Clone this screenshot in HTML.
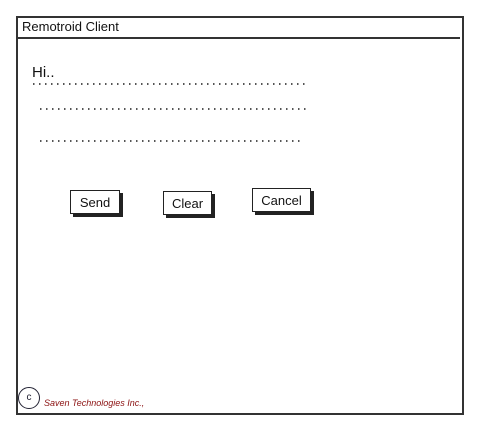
<!DOCTYPE html>
<html><head><meta charset="utf-8"><style>
body{margin:0;width:495px;height:445px;background:#fff;position:relative;overflow:hidden;font-family:"Comic Sans MS","Liberation Sans",sans-serif}
.a{position:absolute}
.frame{left:16px;top:16px;width:444px;height:395px;border:2px solid #333}
.title{left:16px;top:16px;width:444px;height:21px;border-bottom:2px solid #333}
.dots{height:2px;background:linear-gradient(90deg,#555 0 1.5px,transparent 1.5px) 0 0/6px 2px repeat-x}
.btn{background:#fff;border:1.5px solid #222;box-shadow:3px 3px 0 #222;font-size:13px;text-align:center;line-height:24px;color:#111}
</style></head><body>
<div class="a frame"></div>
<div class="a title"></div>
<div class="a" style="left:22px;top:19px;font-size:13px;color:#111">Remotroid Client</div>
<div class="a" style="left:32px;top:64px;font-size:15px;color:#111">Hi..</div>
<div class="a dots" style="left:33px;top:83px;width:274px"></div>
<div class="a dots" style="left:40px;top:108px;width:267px"></div>
<div class="a dots" style="left:40px;top:140px;width:260px"></div>
<div class="a btn" style="left:70px;top:190px;width:48px;height:22px">Send</div>
<div class="a btn" style="left:163px;top:191px;width:47px;height:22px">Clear</div>
<div class="a btn" style="left:252px;top:188px;width:57px;height:22px">Cancel</div>
<div class="a" style="left:18px;top:387px;width:20px;height:20px;border:1.5px solid #223;border-radius:50%;font-size:10px;text-align:center;line-height:20px;color:#223">c</div>
<div class="a" style="left:44px;top:398px;font-size:9px;font-style:italic;color:#8b1010">Saven Technologies Inc.,</div>
</body></html>
